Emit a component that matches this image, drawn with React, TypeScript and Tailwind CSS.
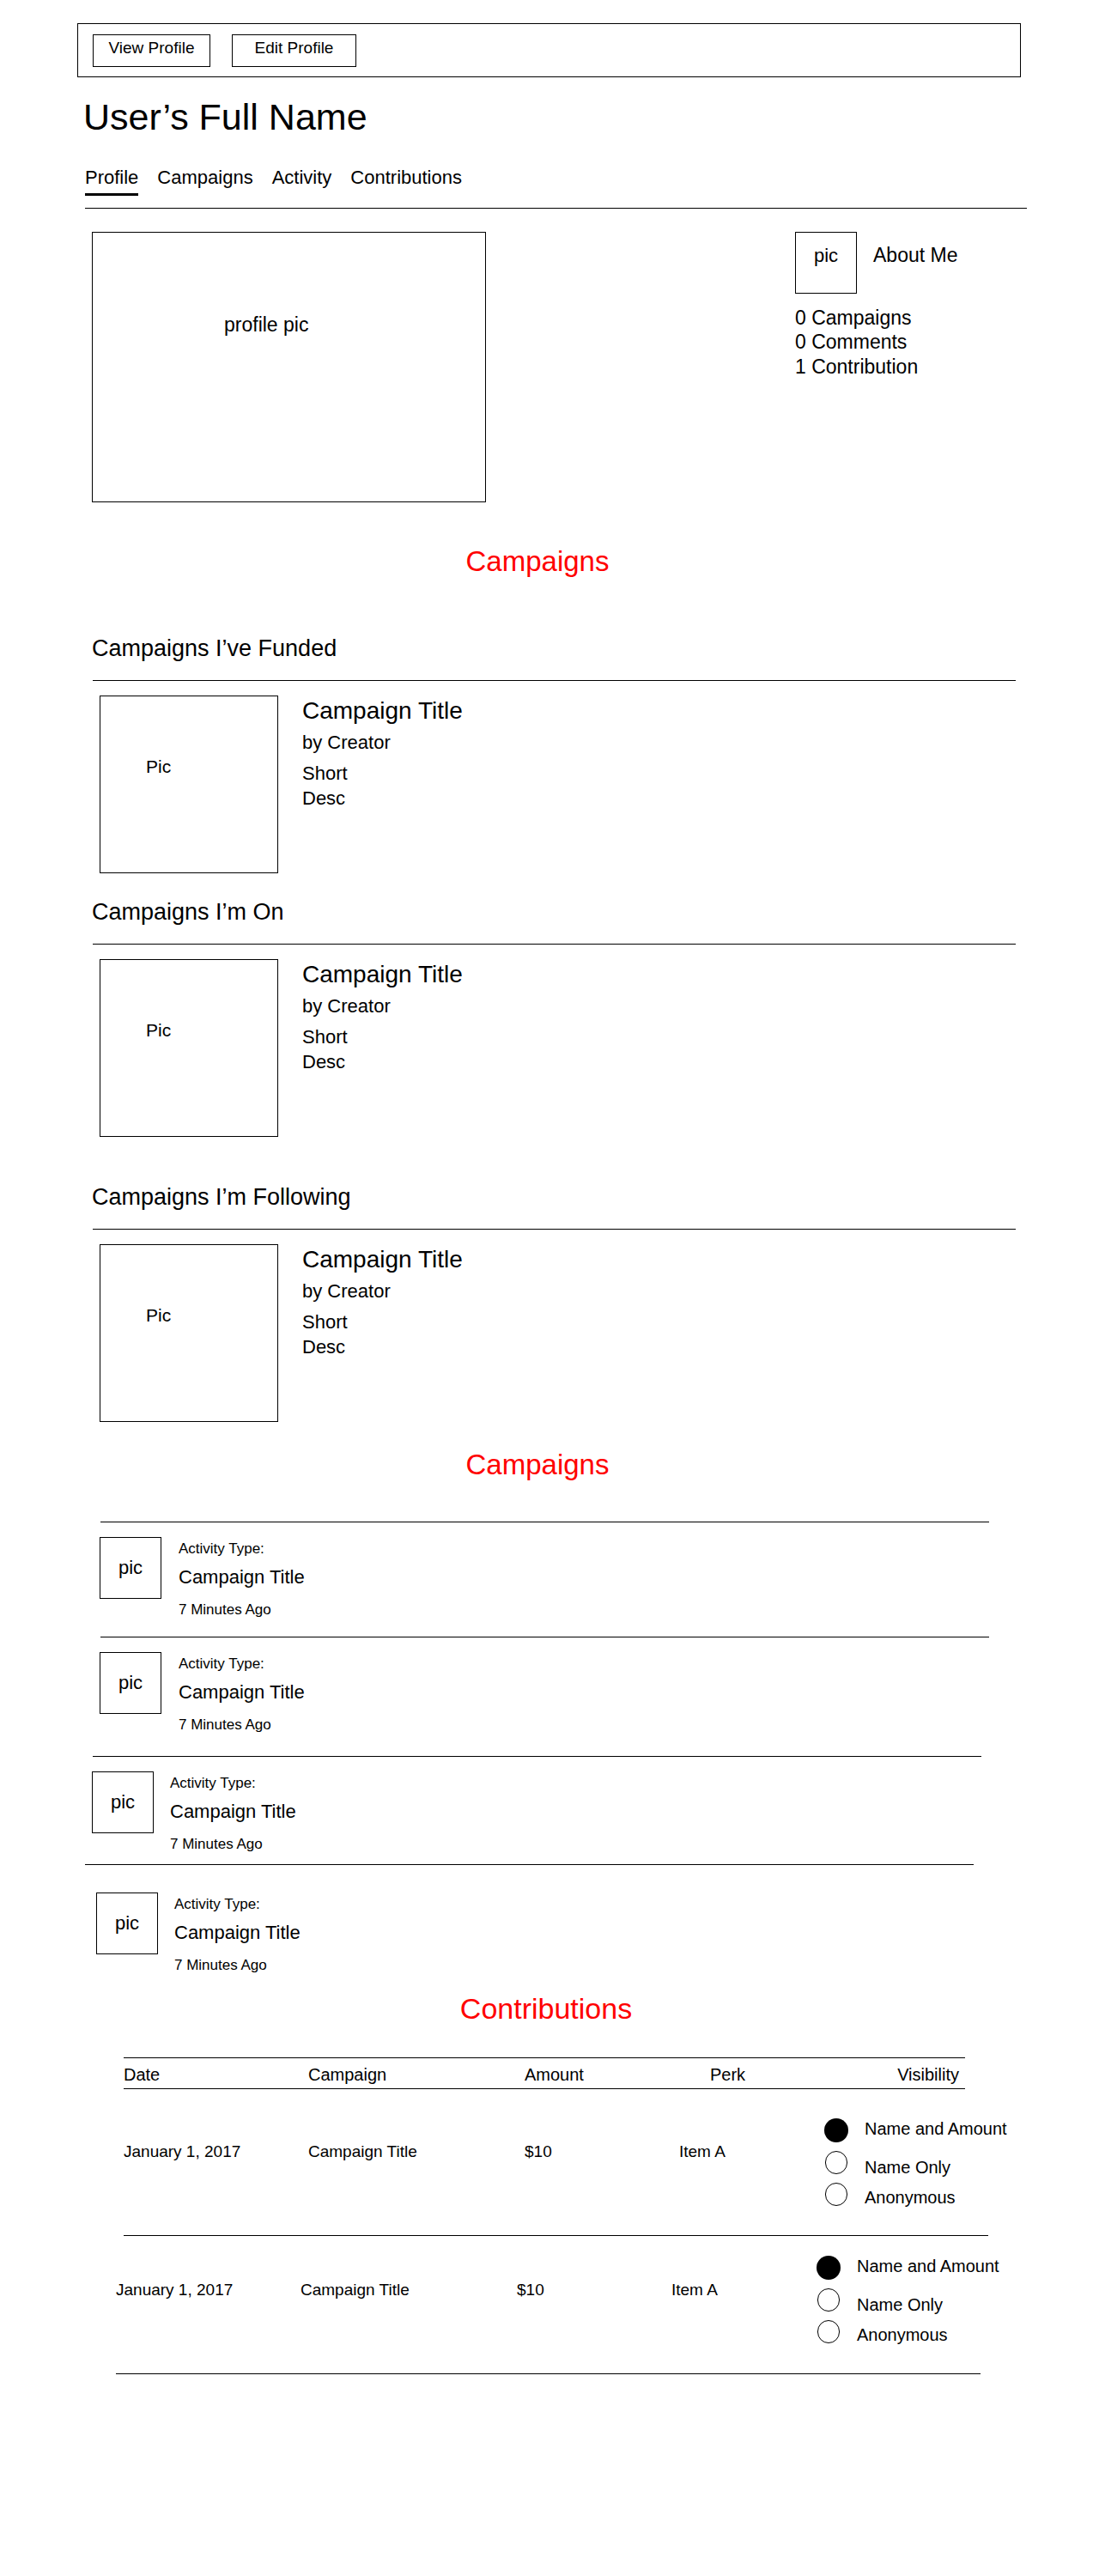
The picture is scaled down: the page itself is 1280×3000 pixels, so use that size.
import React from "react";

function CampaignCard() {
  return (
    <div className="flex items-start ml-[116px] mt-[17px]">
      <div className="w-[208px] h-[207px] border border-black pt-[71px] pl-[53px] text-[21px] leading-[21px] shrink-0">
        Pic
      </div>
      <div className="ml-[28px] flex flex-col">
        <div className="mt-[4px] text-[28px] leading-[27px]">Campaign Title</div>
        <div className="mt-[13px] text-[22px] leading-[22px]">by Creator</div>
        <div className="mt-[10px] text-[22px] leading-[29px]">
          <div>Short</div>
          <div>Desc</div>
        </div>
      </div>
    </div>
  );
}

function SectionHeading({ children, mt }: { children: React.ReactNode; mt: string }) {
  return (
    <div className={mt}>
      <div className="ml-[107px] text-[27px] leading-[27px]">{children}</div>
      <div className="ml-[108px] mt-[23px] w-[1075px] h-px bg-black" />
    </div>
  );
}

function ActivityRow({ boxMl, textGap, mt }: { boxMl: string; textGap: string; mt: string }) {
  return (
    <div className={`flex items-start ${boxMl} ${mt}`}>
      <div className="w-[72px] h-[72px] border border-black shrink-0 flex items-center justify-center text-[22px] leading-[22px]">
        pic
      </div>
      <div className={`${textGap} flex flex-col`}>
        <div className="mt-[5px] text-[17px] leading-[17px]">Activity Type:</div>
        <div className="mt-[14px] text-[22px] leading-[22px]">Campaign Title</div>
        <div className="mt-[18px] text-[17px] leading-[17px]">7 Minutes Ago</div>
      </div>
    </div>
  );
}

function RadioGroup() {
  return (
    <div className="flex flex-col whitespace-nowrap">
      <div className="flex items-start h-[37.5px]">
        <div className="w-[28px] h-[28px] rounded-full bg-black shrink-0" />
        <div className="ml-[19px] mt-[2px] text-[20px] leading-[20px]">Name and Amount</div>
      </div>
      <div className="flex items-start h-[37.5px]">
        <div className="ml-[1px] w-[26px] h-[27px] rounded-full border border-black shrink-0" />
        <div className="ml-[20px] mt-[9px] text-[20px] leading-[20px]">Name Only</div>
      </div>
      <div className="flex items-start h-[37.5px]">
        <div className="ml-[1px] w-[26px] h-[27px] rounded-full border border-black shrink-0" />
        <div className="ml-[20px] mt-[7px] text-[20px] leading-[20px]">Anonymous</div>
      </div>
    </div>
  );
}

function ContributionRow({ ml, h, textPt, radioPt }: { ml: string; h: string; textPt: string; radioPt: string }) {
  return (
    <div className={`${ml} ${h} w-[1007px] border-b border-black flex items-start text-[19px] leading-[19px]`}>
      <div className={`w-[215px] shrink-0 ${textPt}`}>January 1, 2017</div>
      <div className={`w-[252px] shrink-0 ${textPt}`}>Campaign Title</div>
      <div className={`w-[180px] shrink-0 ${textPt}`}>$10</div>
      <div className={`w-[169px] shrink-0 ${textPt}`}>Item A</div>
      <div className={`shrink-0 ${radioPt}`}>
        <RadioGroup />
      </div>
    </div>
  );
}

export default function App() {
  return (
    <div className="font-['Liberation_Sans',Arial,sans-serif] text-black bg-white min-h-[3000px] pt-[27px]">
      {/* Top bar */}
      <div className="ml-[90px] w-[1099px] h-[63px] border border-black flex items-center pl-[17px] gap-[25px]">
        <button className="w-[137px] h-[38px] border border-black text-[19px] leading-[19px] pb-[6px] flex items-center justify-center">
          View Profile
        </button>
        <button className="w-[145px] h-[38px] border border-black text-[19px] leading-[19px] pb-[6px] flex items-center justify-center">
          Edit Profile
        </button>
      </div>

      {/* Name */}
      <h1 className="ml-[97px] mt-[25px] text-[43px] leading-[43px] font-normal">User’s Full Name</h1>

      {/* Tabs */}
      <div className="ml-[99px] mt-[38px] flex gap-[22px] text-[22px] leading-[22px]">
        <div className="pb-[7px] border-b-[3px] border-black">Profile</div>
        <div className="pb-[7px] border-b-[3px] border-transparent">Campaigns</div>
        <div className="pb-[7px] border-b-[3px] border-transparent">Activity</div>
        <div className="pb-[7px] border-b-[3px] border-transparent">Contributions</div>
      </div>
      <div className="ml-[99px] mt-[14px] w-[1097px] h-px bg-black" />

      {/* Profile section */}
      <div className="ml-[107px] mt-[27px] flex items-start">
        <div className="w-[459px] h-[315px] border border-black pt-[96px] pl-[153px] text-[23px] leading-[23px] shrink-0">
          profile pic
        </div>
        <div className="ml-[360px] flex flex-col">
          <div className="flex items-start gap-[19px]">
            <div className="w-[72px] h-[72px] border border-black pt-[16px] text-center text-[22px] leading-[22px] shrink-0">
              pic
            </div>
            <div className="mt-[16px] text-[23px] leading-[23px]">About Me</div>
          </div>
          <div className="mt-[14px] text-[23px] leading-[28.3px]">
            <div>0 Campaigns</div>
            <div>0 Comments</div>
            <div>1 Contribution</div>
          </div>
        </div>
      </div>

      {/* Campaigns heading */}
      <div className="ml-[90px] w-[1072px] mt-[52px] text-center text-[33px] leading-[33px] text-[#ff0000]">
        Campaigns
      </div>

      <SectionHeading mt="mt-[72px]">Campaigns I’ve Funded</SectionHeading>
      <CampaignCard />

      <SectionHeading mt="mt-[32px]">Campaigns I’m On</SectionHeading>
      <CampaignCard />

      <SectionHeading mt="mt-[57px]">Campaigns I’m Following</SectionHeading>
      <CampaignCard />

      {/* Activity heading */}
      <div className="ml-[90px] w-[1072px] mt-[33px] text-center text-[33px] leading-[33px] text-[#ff0000]">
        Campaigns
      </div>

      {/* Activity list */}
      <div className="ml-[117px] mt-[50px] w-[1035px] h-px bg-black" />
      <ActivityRow boxMl="ml-[116px]" textGap="ml-[20px]" mt="mt-[17px]" />
      <div className="ml-[117px] mt-[23px] w-[1035px] h-px bg-black" />
      <ActivityRow boxMl="ml-[116px]" textGap="ml-[20px]" mt="mt-[17px]" />
      <div className="ml-[108px] mt-[28px] w-[1035px] h-px bg-black" />
      <ActivityRow boxMl="ml-[107px]" textGap="ml-[19px]" mt="mt-[17px]" />
      <div className="ml-[99px] mt-[15px] w-[1035px] h-px bg-black" />
      <ActivityRow boxMl="ml-[112px]" textGap="ml-[19px]" mt="mt-[32px]" />

      {/* Contributions */}
      <div className="ml-[90px] w-[1092px] mt-[25px] text-center text-[34px] leading-[34px] text-[#ff0000]">
        Contributions
      </div>

      <div className="ml-[144px] mt-[40px] w-[980px] border-t border-b border-black pt-[9px] pb-[6px] flex text-[20px] leading-[20px]">
        <div className="w-[215px] shrink-0">Date</div>
        <div className="w-[252px] shrink-0">Campaign</div>
        <div className="w-[216px] shrink-0">Amount</div>
        <div className="w-[120px] shrink-0">Perk</div>
        <div className="flex-1 text-right pr-[7px]">Visibility</div>
      </div>

      <ContributionRow ml="ml-[144px]" h="h-[171px]" textPt="pt-[63px]" radioPt="pt-[34px]" />
      <ContributionRow ml="ml-[135px]" h="h-[161px]" textPt="pt-[53px]" radioPt="pt-[23px]" />
    </div>
  );
}
